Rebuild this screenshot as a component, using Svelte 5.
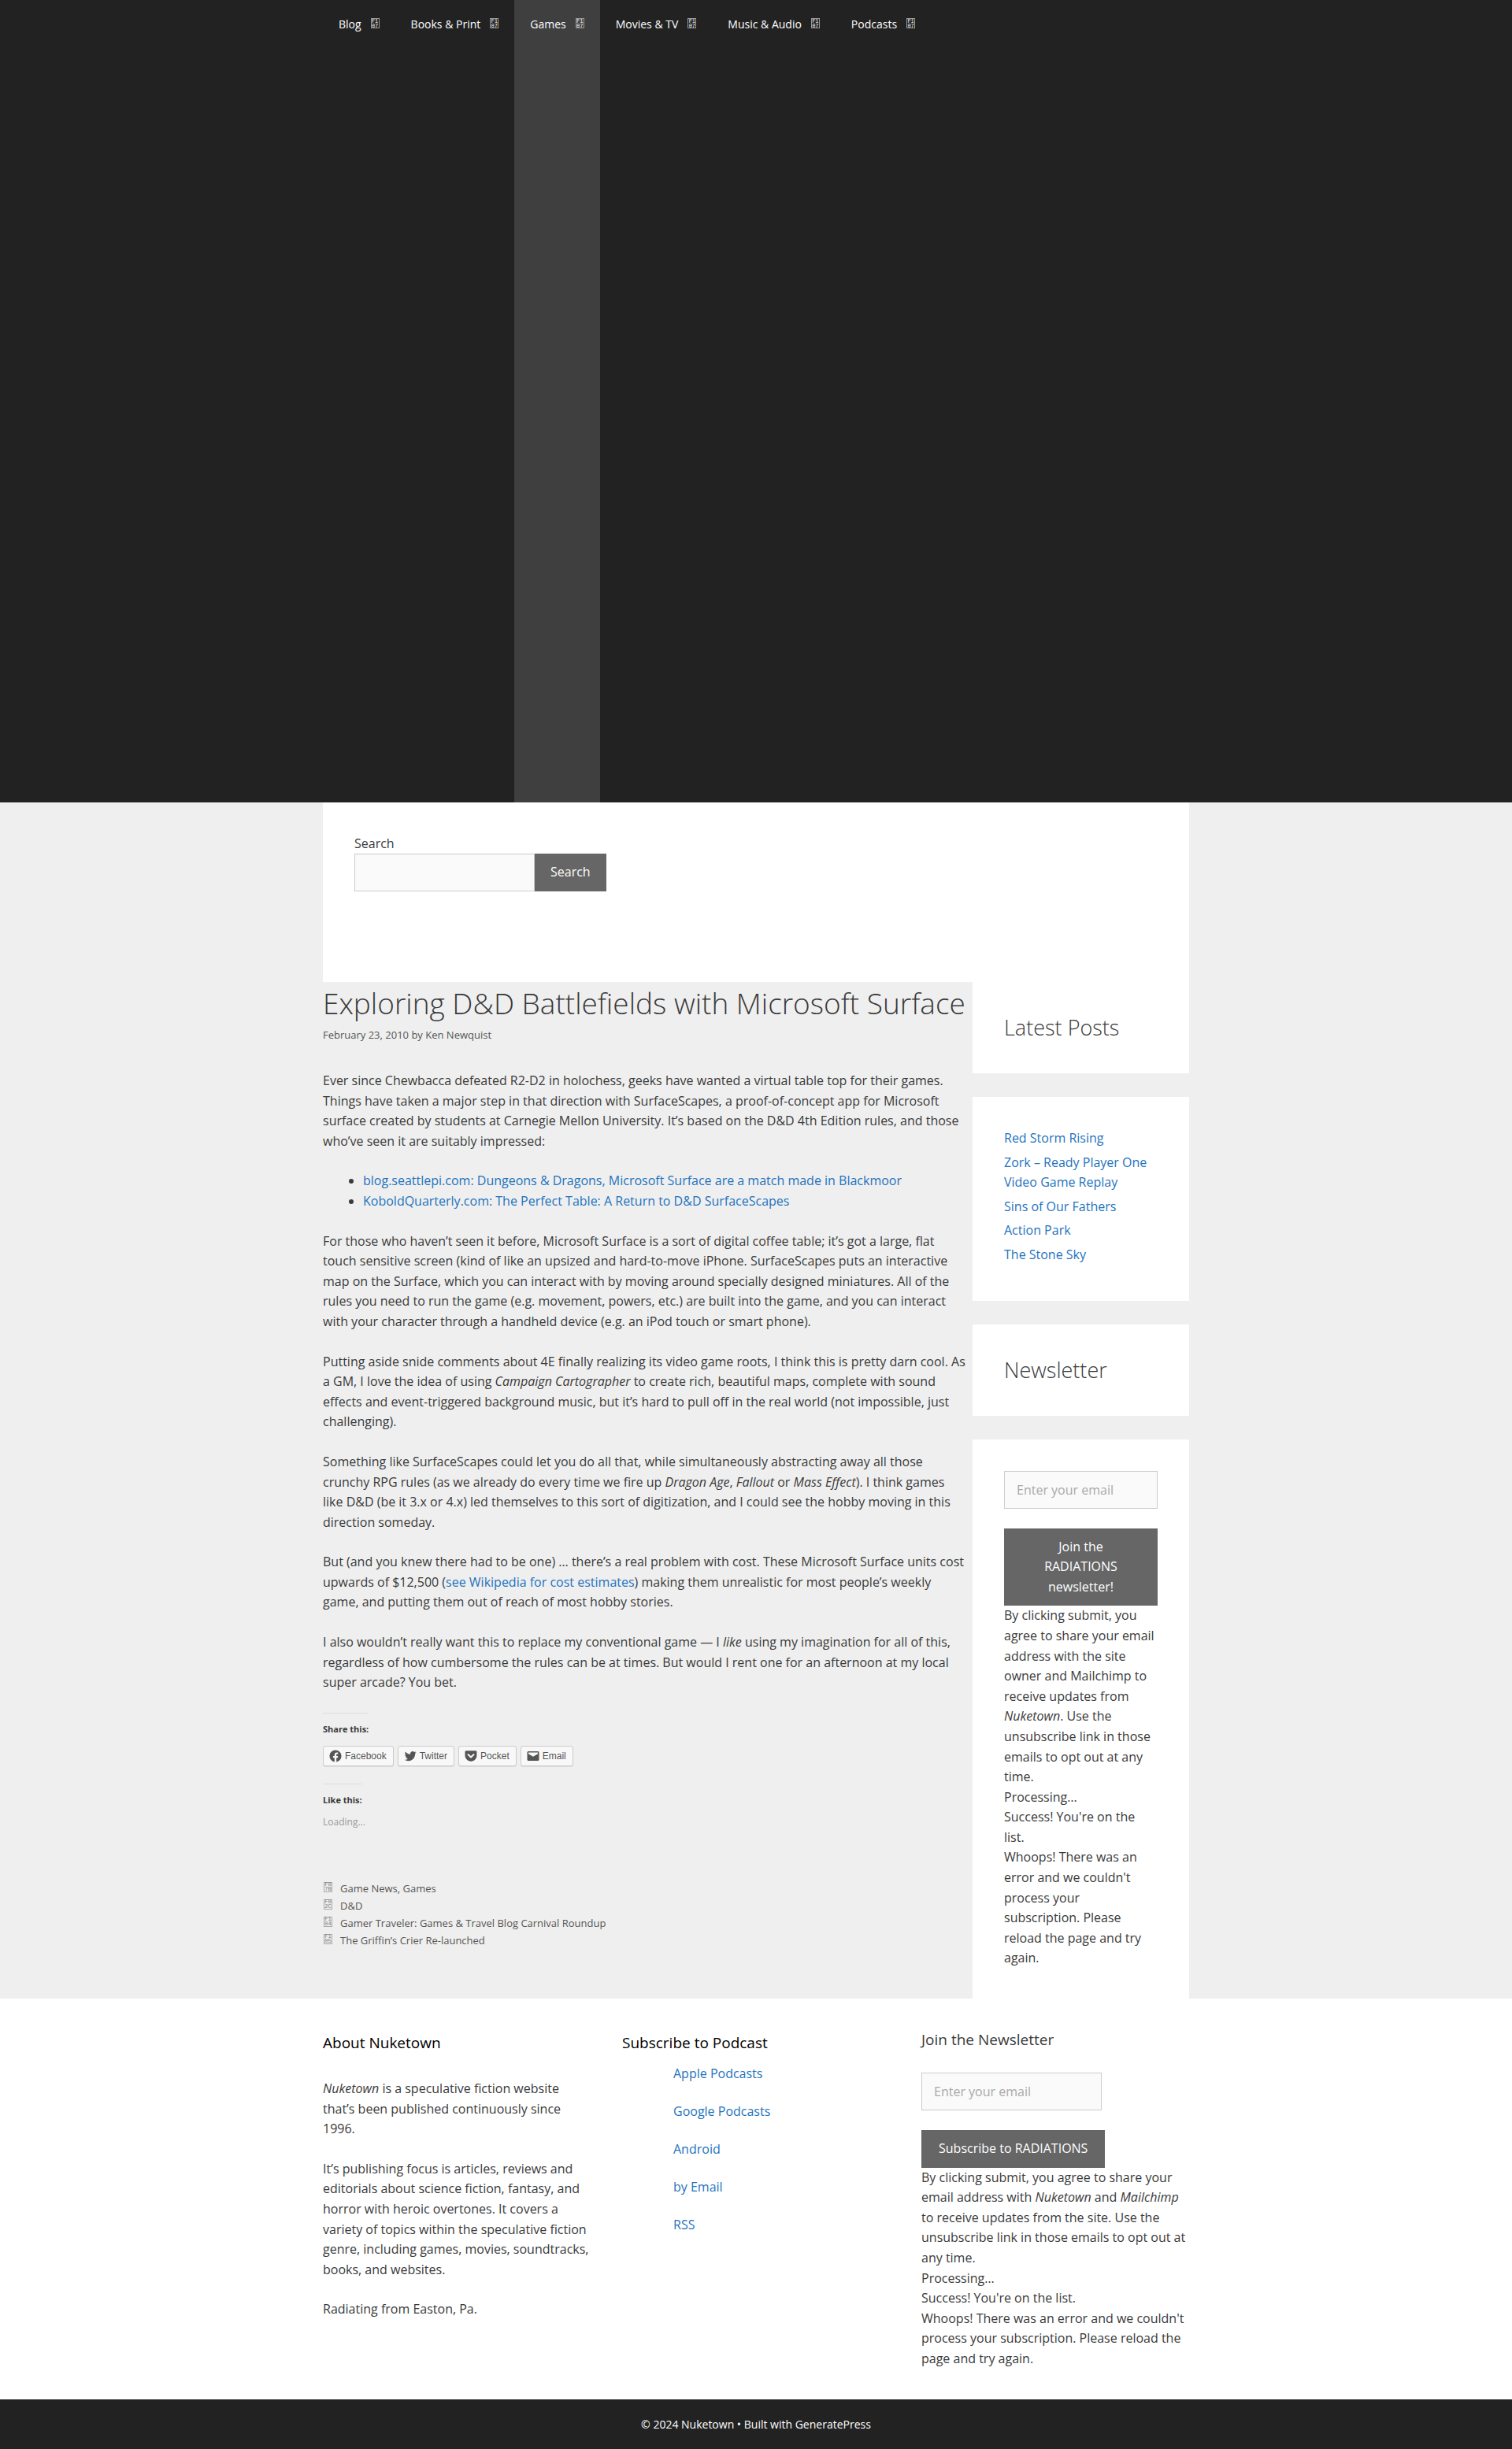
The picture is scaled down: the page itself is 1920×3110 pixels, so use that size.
<script>
  const nav = ['Blog', 'Books & Print', 'Games', 'Movies & TV', 'Music & Audio', 'Podcasts'];
  const posts = ['Red Storm Rising', 'Zork – Ready Player One Video Game Replay', 'Sins of Our Fathers', 'Action Park', 'The Stone Sky'];
  const podcasts = ['Apple Podcasts', 'Google Podcasts', 'Android', 'by Email', 'RSS'];
  const share = [
    ['Facebook', 'M12 2C6.5 2 2 6.5 2 12c0 5 3.7 9.1 8.4 9.9v-7H7.9V12h2.5V9.8c0-2.5 1.5-3.9 3.8-3.9 1.1 0 2.2.2 2.2.2v2.5h-1.3c-1.2 0-1.6.8-1.6 1.6V12h2.8l-.4 2.9h-2.3v7C18.3 21.1 22 17 22 12c0-5.500-4.500-10-10-10z'],
    ['Twitter', 'M22.230 5.924c-.736.326-1.527.547-2.357.646.847-.508 1.498-1.312 1.804-2.270-.793.470-1.671.812-2.606.996-.748-.797-1.814-1.296-2.994-1.296-2.266 0-4.103 1.837-4.103 4.103 0 .322.036.635.106.935-3.410-.171-6.433-1.804-8.457-4.287-.353.606-.556 1.311-.556 2.063 0 1.424.724 2.679 1.825 3.415-.673-.021-1.305-.206-1.859-.513v.052c0 1.988 1.414 3.647 3.292 4.023-.344.095-.707.145-1.081.145-.264 0-.521-.026-.772-.074.522 1.630 2.038 2.817 3.833 2.850-1.404 1.100-3.174 1.757-5.096 1.757-.331 0-.658-.019-.979-.057 1.816 1.164 3.973 1.843 6.290 1.843 7.547 0 11.675-6.252 11.675-11.675 0-.178-.004-.355-.012-.531.802-.578 1.497-1.300 2.047-2.124z'],
    ['Pocket', 'M21.927 4.194C21.667 3.480 20.982 3 20.222 3H3.839c-.768 0-1.450.471-1.720 1.214C2.040 4.440 2 4.677 2 4.915v6.035l.069 1.200c.290 2.730 1.707 5.115 3.899 6.778.039.030.079.059.119.089l.025.018a9.900 9.900 0 0 0 3.910 1.727 10.060 10.060 0 0 0 6.050-.598 9.700 9.700 0 0 0 1.815-1.130c2.185-1.660 3.609-4.049 3.899-6.778l.069-1.200V4.914a2.100 2.100 0 0 0-.119-.720zm-4.235 6.287-4.704 4.512a1.372 1.372 0 0 1-1.898 0l-4.705-4.512a1.371 1.371 0 1 1 1.898-1.979l3.756 3.601 3.755-3.601a1.372 1.372 0 0 1 1.898 1.979z'],
    ['Email', 'M20 4H4c-1.105 0-2 .895-2 2v12c0 1.105.895 2 2 2h16c1.105 0 2-.895 2-2V6c0-1.105-.895-2-2-2zm0 4.236-8 4.882-8-4.882V6h16v2.236z']
  ];
  const meta = [
    ['F07B', ['Game News', 'Games']],
    ['F02C', ['D&D']],
    ['F104', ['Gamer Traveler: Games & Travel Blog Carnival Roundup']],
    ['F105', ['The Griffin’s Crier Re-launched']]
  ];
</script>

{#snippet codeBox(code)}
  <span class="code-box" aria-hidden="true"><span>{code.slice(0, 2)}</span><span>{code.slice(2)}</span></span>
{/snippet}

<header>
  <nav class="wrap" aria-label="Primary">
    {#each nav as item}
      <a href="#top" class:current={item === 'Games'}><span>{item}</span>{@render codeBox('F107')}</a>
    {/each}
  </nav>
</header>

<div class="wrap">
  <form class="search" role="search" onsubmit={(e) => e.preventDefault()}>
    <label for="search">Search</label>
    <div class="search-row">
      <input id="search" type="search" />
      <button>Search</button>
    </div>
  </form>

  <div class="columns">
    <main>
      <h1>Exploring D&amp;D Battlefields with Microsoft Surface</h1>
      <p class="byline">February 23, 2010 by <a href="#author">Ken Newquist</a></p>

      <div class="entry">
        <p>Ever since Chewbacca defeated R2-D2 in holochess, geeks have wanted a virtual table top for their games. Things have taken a major step in that direction with SurfaceScapes, a proof-of-concept app for Microsoft surface created by students at Carnegie Mellon University. It’s based on the D&amp;D 4th Edition rules, and those who’ve seen it are suitably impressed:</p>
        <ul>
          <li><a href="#blackmoor">blog.seattlepi.com: Dungeons &amp; Dragons, Microsoft Surface are a match made in Blackmoor</a></li>
          <li><a href="#table">KoboldQuarterly.com: The Perfect Table: A Return to D&amp;D SurfaceScapes</a></li>
        </ul>
        <p>For those who haven’t seen it before, Microsoft Surface is a sort of digital coffee table; it’s got a large, flat touch sensitive screen (kind of like an upsized and hard-to-move iPhone. SurfaceScapes puts an interactive map on the Surface, which you can interact with by moving around specially designed miniatures. All of the rules you need to run the game (e.g. movement, powers, etc.) are built into the game, and you can interact with your character through a handheld device (e.g. an iPod touch or smart phone).</p>
        <p>Putting aside snide comments about 4E finally realizing its video game roots, I think this is pretty darn cool. As a GM, I love the idea of using <em>Campaign Cartographer</em> to create rich, beautiful maps, complete with sound effects and event-triggered background music, but it’s hard to pull off in the real world (not impossible, just challenging).</p>
        <p>Something like SurfaceScapes could let you do all that, while simultaneously abstracting away all those crunchy RPG rules (as we already do every time we fire up <em>Dragon Age</em>, <em>Fallout</em> or <em>Mass Effect</em>). I think games like D&amp;D (be it 3.x or 4.x) led themselves to this sort of digitization, and I could see the hobby moving in this direction someday.</p>
        <p>But (and you knew there had to be one) … there’s a real problem with cost. These Microsoft Surface units cost upwards of $12,500 (<a href="#costs">see Wikipedia for cost estimates</a>) making them unrealistic for most people’s weekly game, and putting them out of reach of most hobby stories.</p>
        <p>I also wouldn’t really want this to replace my conventional game — I <em>like</em> using my imagination for all of this, regardless of how cumbersome the rules can be at times. But would I rent one for an afternoon at my local super arcade? You bet.</p>
      </div>

      <section class="sharing">
        <h3>Share this:</h3>
        <div class="share-row">
          {#each share as [name, d]}
            <a href="#share"><svg viewBox="0 0 24 24" aria-hidden="true"><path {d} /></svg>{name}</a>
          {/each}
        </div>
        <h3>Like this:</h3>
        <p class="loading">Loading...</p>
      </section>

      <footer class="meta">
        {#each meta as [code, links]}
          <div>{@render codeBox(code)}<span>{#each links as l, i}{i ? ', ' : ''}<a href="#meta">{l}</a>{/each}</span></div>
        {/each}
      </footer>
    </main>

    <aside>
      <section class="widget"><h2>Latest Posts</h2></section>
      <section class="widget">
        <ul class="posts">
          {#each posts as p}<li><a href="#post">{p}</a></li>{/each}
        </ul>
      </section>
      <section class="widget"><h2>Newsletter</h2></section>
      <section class="widget grow">
        <form onsubmit={(e) => e.preventDefault()}>
          <input type="email" placeholder="Enter your email" aria-label="Email" />
          <button>Join the RADIATIONS newsletter!</button>
        </form>
        <div>By clicking submit, you agree to share your email address with the site owner and Mailchimp to receive updates from <em>Nuketown</em>. Use the unsubscribe link in those emails to opt out at any time.</div>
        <div>Processing…</div>
        <div>Success! You're on the list.</div>
        <div>Whoops! There was an error and we couldn't process your subscription. Please reload the page and try again.</div>
      </section>
    </aside>
  </div>
</div>

<section class="footer-widgets">
  <div class="wrap thirds">
    <div>
      <h4 class="dark">About Nuketown</h4>
      <div class="about">
        <p><em>Nuketown</em> is a speculative fiction website that’s been published continuously since 1996.</p>
        <p>It’s publishing focus is articles, reviews and editorials about science fiction, fantasy, and horror with heroic overtones. It covers a variety of topics within the speculative fiction genre, including games, movies, soundtracks, books, and websites.</p>
        <p>Radiating from Easton, Pa.</p>
      </div>
    </div>
    <div>
      <h4 class="dark">Subscribe to Podcast</h4>
      <div class="podcasts">
        {#each podcasts as p}<a href="#podcast">{p}</a>{/each}
      </div>
    </div>
    <div>
      <h4>Join the Newsletter</h4>
      <form class="join" onsubmit={(e) => e.preventDefault()}>
        <input type="email" placeholder="Enter your email" aria-label="Email address" />
        <button>Subscribe to RADIATIONS</button>
      </form>
      <div>By clicking submit, you agree to share your email address with <em>Nuketown</em> and <em>Mailchimp</em> to receive updates from the site. Use the unsubscribe link in those emails to opt out at any time.</div>
      <div>Processing…</div>
      <div>Success! You're on the list.</div>
      <div>Whoops! There was an error and we couldn't process your subscription. Please reload the page and try again.</div>
    </div>
  </div>
</section>

<footer class="site-info">© 2024 Nuketown • Built with <a href="#gp">GeneratePress</a></footer>

<style>
  :global(body) {
    margin: 0;
    background: #efefef;
    color: #3a3a3a;
    font-family: 'Open Sans', 'Noto Sans', sans-serif;
    font-size: 16px;
    line-height: 1.6;
  }
  p, h1, h2, h3, h4, ul { margin: 0; padding: 0; }
  a { color: #1e73be; text-decoration: none; }
  input, button { font: inherit; box-sizing: border-box; border-radius: 0; }
  input {
    height: 48px;
    padding: 10px 15px;
    border: 1px solid #ccc;
    background: #fafafa;
    color: #666;
  }
  input::placeholder { color: #a9a9a9; opacity: 1; }
  button { padding: 11px 22px; border: 0; background: #666; color: #fff; }
  .wrap { box-sizing: border-box; max-width: 1100px; margin: 0 auto; }

  .code-box {
    display: flex; flex-direction: column; align-items: center; justify-content: center;
    box-sizing: border-box; width: 11px; height: 13px; flex: none;
    border: 1px solid #999;
    font: 7px/6px 'Liberation Mono', monospace;
  }

  header { background: #222; }
  nav { display: flex; min-height: 1019px; }
  nav a { display: flex; align-items: flex-start; gap: 12px; padding: 0 20px; color: #fff; font-size: 14px; line-height: 61px; }
  nav .current { background: #3f3f3f; }
  nav .code-box { margin-top: 23px; }

  .search { box-sizing: border-box; min-height: 228px; padding: 40px; background: #fff; }
  .search label { display: block; line-height: 25px; }
  .search-row { display: flex; }
  .search-row input { width: 229px; }
  .search-row button { padding: 0 20px; }

  .columns { display: grid; grid-template-columns: minmax(0, 3fr) minmax(0, 1fr); }
  h1 { font-size: 37px; font-weight: 300; line-height: 54px; }
  .byline { padding-top: 2px; font-size: 13px; line-height: 22px; color: #555; }
  .byline a, .meta a { color: #555; }
  .entry { display: flex; flex-direction: column; gap: 25px; padding: 35px 8px 0 0; }
  .entry ul { padding-left: 51px; }

  .sharing { padding-top: 25px; font-size: 12px; }
  .sharing h3 { display: table; border-top: 1px solid #ddd; padding-top: 9px; font-size: 11px; font-weight: 700; line-height: 22px; }
  .share-row { display: flex; gap: 5px; padding: 10px 0 22px; }
  .share-row a {
    display: flex; align-items: center; gap: 3px;
    padding: 0 8px 0 6px; height: 24px;
    border: 1px solid #ccc; border-radius: 3px;
    background: #f8f8f8; box-shadow: 0 1px 0 rgba(0, 0, 0, 0.08);
    color: #555; font: 12px/24px 'Liberation Sans', sans-serif;
  }
  .share-row svg { width: 18px; height: 18px; fill: #555; }
  .loading { padding-top: 6px; color: #999; line-height: 22px; }
  .meta { padding: 62px 0 40px; font-size: 13px; line-height: 22px; color: #555; }
  .meta div { display: flex; gap: 10px; padding-left: 1px; }
  .meta .code-box { margin-top: 3px; border-color: #aaa; color: #777; }

  aside { display: flex; flex-direction: column; gap: 30px; }
  .widget { padding: 40px; background: #fff; }
  .grow { flex: 1; padding-bottom: 38px; }
  h2 { font-size: 27px; font-weight: 300; line-height: 36px; }
  .posts { list-style: none; }
  .posts li { margin-bottom: 5px; }
  .widget form { display: flex; flex-direction: column; gap: 25px; }
  .widget input { width: 100%; }

  .footer-widgets { padding: 40px 0 38px; background: #fff; }
  .thirds { display: grid; grid-template-columns: repeat(3, 1fr); gap: 40px; }
  h4 { font-size: 19px; font-weight: 400; line-height: 24px; }
  .dark { color: #000; line-height: 32px; }
  .about { display: flex; flex-direction: column; gap: 25px; padding-top: 30px; }
  .podcasts { display: flex; flex-direction: column; gap: 23px; padding: 11px 0 0 65px; line-height: 25px; }
  .join { display: flex; flex-direction: column; align-items: flex-start; gap: 25px; padding-top: 30px; }
  .join input { width: 229px; }

  .site-info { padding: 20px; background: #222; color: #fff; text-align: center; font-size: 14px; line-height: 24px; }
  .site-info a { color: #fff; }
</style>
